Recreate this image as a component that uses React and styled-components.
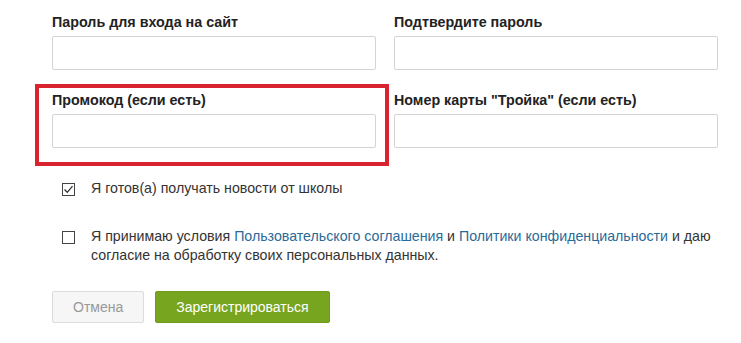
import React, { useState } from "react";
import styled, { createGlobalStyle } from "styled-components";

const GlobalStyle = createGlobalStyle`
    body {
        margin: 0;
        background: #fff;
        font-family: "Liberation Sans", Arial, sans-serif;
        color: #333;
    }
`;

const Form = styled.form`
    display: flex;
    flex-direction: column;
    padding: 13px 0 0 52px;
    width: 741px;
    box-sizing: border-box;
`;

const Grid = styled.div`
    display: grid;
    grid-template-columns: 324px 324px;
    column-gap: 18px;
    row-gap: 21px;
`;

const Field = styled.div`
    position: relative;
    display: flex;
    flex-direction: column;
    gap: 5px;

    /* red highlight frame round the field */
    &::before {
        content: "";
        display: ${(props) => (props.highlighted ? "block" : "none")};
        position: absolute;
        top: -7px;
        left: -17px;
        right: -13px;
        bottom: -18px;
        border: 4px solid #d9232e;
        pointer-events: none;
    }
`;

const Label = styled.label`
    font-size: 14.3px;
    font-weight: bold;
    line-height: 18px;
    color: #222;
`;

const Input = styled.input`
    height: 34px;
    box-sizing: border-box;
    border: 1px solid #d4d4d4;
    border-radius: 2px;
    padding: 0 10px;
    font-size: 14px;
    font-family: inherit;
    outline: none;
`;

const CheckRow = styled.label`
    display: flex;
    align-items: flex-start;
    gap: 16px;
    margin-left: 10px;
    margin-top: ${(props) => props.top}px;
    font-size: 14.2px;
    line-height: 19px;
    color: #333;
    cursor: pointer;
`;

const Box = styled.span`
    flex: none;
    width: 13px;
    height: 13px;
    box-sizing: border-box;
    border: 1px solid #444;
    margin-top: 4px;
    display: flex;
    align-items: center;
    justify-content: center;
    background: #fff;
`;

const CheckText = styled.span`
    width: 630px;
`;

const Link = styled.a`
    color: #2a6a98;
    text-decoration: none;
`;

const Buttons = styled.div`
    display: flex;
    gap: 11px;
    margin-top: 26px;
`;

const Button = styled.button`
    height: 32px;
    padding: 0 20px;
    font-size: 14px;
    font-family: inherit;
    border-radius: 2px;
    cursor: pointer;
    border: 1px solid ${(props) => (props.primary ? "#6f9c1b" : "#dcdcdc")};
    background: ${(props) => (props.primary ? "#77a51f" : "#f6f6f6")};
    color: ${(props) => (props.primary ? "#fff" : "#999")};
`;

const Checkbox = ({ checked, onToggle, children, top }) => (
    <CheckRow top={top} onClick={onToggle}>
        <Box>
            {checked && (
                <svg width="11" height="11" viewBox="0 0 11 11">
                    <path d="M1.5 5.5 L4.3 8.3 L9.5 2.2" fill="none" stroke="#333" strokeWidth="1.3" />
                </svg>
            )}
        </Box>
        <CheckText>{children}</CheckText>
    </CheckRow>
);

const App = () => {
    const [news, setNews] = useState(true);
    const [terms, setTerms] = useState(false);

    return (
        <>
            <GlobalStyle />
            <Form onSubmit={(e) => e.preventDefault()}>
                <Grid>
                    <Field>
                        <Label>Пароль для входа на сайт</Label>
                        <Input type="password" />
                    </Field>
                    <Field>
                        <Label>Подтвердите пароль</Label>
                        <Input type="password" />
                    </Field>
                    <Field highlighted>
                        <Label>Промокод (если есть)</Label>
                        <Input />
                    </Field>
                    <Field>
                        <Label>Номер карты "Тройка" (если есть)</Label>
                        <Input />
                    </Field>
                </Grid>
                <Checkbox top={31} checked={news} onToggle={() => setNews(!news)}>
                    Я готов(а) получать новости от школы
                </Checkbox>
                <Checkbox top={29} checked={terms} onToggle={() => setTerms(!terms)}>
                    Я принимаю условия <Link href="#">Пользовательского соглашения</Link> и{" "}
                    <Link href="#">Политики конфиденциальности</Link> и даю согласие на обработку своих
                    персональных данных.
                </Checkbox>
                <Buttons>
                    <Button type="button">Отмена</Button>
                    <Button type="submit" primary>
                        Зарегистрироваться
                    </Button>
                </Buttons>
            </Form>
        </>
    );
};

export default App;
